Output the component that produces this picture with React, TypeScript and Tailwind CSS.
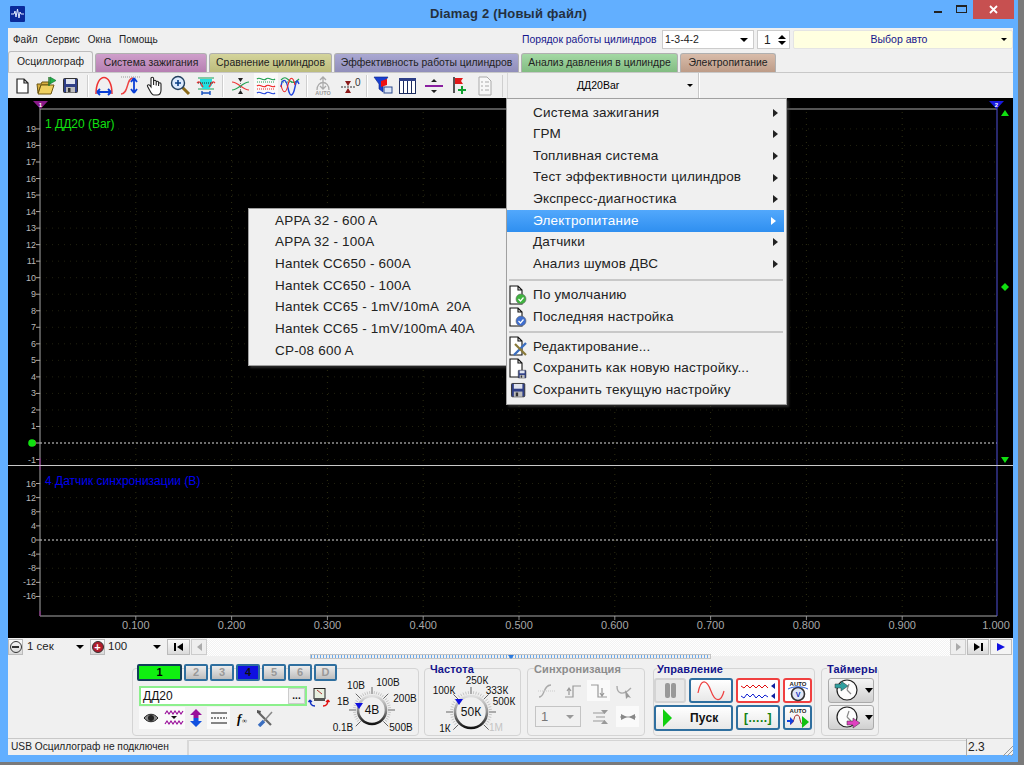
import React from "react";

const F = "[font-family:'Liberation_Sans',Arial,sans-serif]";

const Doc = ({ x = 0, y = 0 }: { x?: number; y?: number }) => (
  <path d={`M${x + 1} ${y + 1}h7l4 4v10h-11z M${x + 8} ${y + 1}v4h4`} fill="#fff" stroke="#222" strokeWidth="1.2" />
);

const Floppy = ({ x = 0, y = 0, s = 1 }: { x?: number; y?: number; s?: number }) => (
  <g transform={`translate(${x} ${y}) scale(${s})`}>
    <rect x="0.5" y="0.5" width="14" height="14" rx="1" fill="#2f3f86" stroke="#333" />
    <rect x="3" y="1" width="9" height="5" fill="#dfe3ee" />
    <rect x="3" y="9" width="9" height="5.5" fill="#bbb" />
    <rect x="5" y="10" width="2.5" height="4" fill="#333" />
  </g>
);

const tool: Record<string, React.ReactNode> = {
  file: <Doc x={4} y={3} />,
  open: (
    <>
      <path d="M1 9h4l1-2h7v3H5l-3 8z" fill="#d8b040" stroke="#6b5510" />
      <path d="M2 19l3-9h13l-3 9z" fill="#efd060" stroke="#6b5510" />
      <path d="M13 2v9" stroke="#2a7a2a" strokeWidth="1.4" />
      <path d="M14 2l6 3.5-6 3.5z" fill="#22b14c" stroke="#14692c" strokeWidth=".6" />
    </>
  ),
  save: <Floppy x={2} y={3} />,
  peak: (
    <>
      <path d="M2 19C2 -3 18 -3 18 19" fill="none" stroke="#ee3333" strokeWidth="1.5" />
      <path d="M3 17h14M3 17l3-3M3 17l3 3M17 17l-3-3M17 17l-3 3" stroke="#0a3fd6" strokeWidth="1.8" fill="none" />
    </>
  ),
  rise: (
    <>
      <path d="M1 2h19" stroke="#999" strokeDasharray="1 1" />
      <path d="M1 19C9 19 6 3 13 3" fill="none" stroke="#ee4444" strokeWidth="1.5" />
      <path d="M14 3v15M14 3l-3 4M14 3l3 4M14 18l-3-4M14 18l3-4" stroke="#0a3fd6" strokeWidth="1.8" fill="none" />
    </>
  ),
  hand: (
    <path d="M6 12V3.500a1.300 1.300 0 0 1 2.600 0V10V6.500a1.300 1.300 0 0 1 2.600 0V10.500V7.500a1.200 1.200 0 0 1 2.400 0V11V9a1.200 1.200 0 0 1 2.400 0v6c0 3-1.500 5-4 5H9c-2 0-3-2-4.500-5L2.600 11.500c-.8-1.300 1-2.400 2-1.300z" fill="#fff" stroke="#222" strokeWidth="1.100" />
  ),
  zoom: (
    <>
      <path d="M12 12l7 7" stroke="#8a6a1a" strokeWidth="3" />
      <circle cx="8" cy="8" r="6.500" fill="#dbeafe" stroke="#22405f" strokeWidth="1.400" />
      <path d="M5 8h6M8 5v6" stroke="#0a3f86" strokeWidth="1.600" />
    </>
  ),
  band: (
    <>
      <path d="M2 3h16M2 14h16" stroke="#18a058" strokeWidth="1.200" />
      <path d="M4 4h12v6l-3 4H7L4 10z" fill="#21e0e0" />
      <path d="M1 8c3-3 4 1 6 4M19 8c-3-3-4 1-6 4" stroke="#ee3333" fill="none" strokeWidth="1.300" />
      <path d="M2 8h16" stroke="#222" strokeDasharray="1 1" />
      <path d="M6 18h8M6 16v4M14 16v4" stroke="#1650c0" strokeWidth="1.400" />
    </>
  ),
  cross: (
    <>
      <path d="M2 7c6 0 11 8 17 8" stroke="#ee3333" fill="none" strokeWidth="1.200" />
      <path d="M2 15c6 0 11-8 17-8" stroke="#20a050" fill="none" strokeWidth="1.200" />
      <path d="M8 3h5l-2.500 4zM8 19h5l-2.500-4z" fill="#222" />
      <path d="M10.500 6v10" stroke="#777" strokeDasharray="1 1" />
    </>
  ),
  waves: (
    <>
      <path d="M1 4c3-3 6 3 9 0s6 3 9 0" stroke="#20a050" fill="none" strokeWidth="1.200" />
      <path d="M1 7h18" stroke="#20a050" strokeDasharray="1 1" />
      <path d="M1 11c3-3 6 3 9 0s6 3 9 0" stroke="#ee2222" fill="none" strokeWidth="1.200" />
      <path d="M1 14h18" stroke="#ee2222" strokeDasharray="1 1" />
      <path d="M1 18c3-3 6 3 9 0s6 3 9 0" stroke="#2244dd" fill="none" strokeWidth="1.200" />
    </>
  ),
  over: (
    <>
      <path d="M1 7h18" stroke="#20a050" strokeDasharray="1 1" />
      <path d="M1 5c4-4 5-2 9 1s6 1 9-2" stroke="#20a050" fill="none" strokeWidth="1.200" />
      <path d="M1 12c1-9 5-9 7 1s5 9 7-1 3-5 4-3" stroke="#2244dd" fill="none" strokeWidth="1.400" />
      <path d="M1 10c2 9 5 9 7 0s5-9 7 0" stroke="#ee2222" fill="none" strokeWidth="1.100" />
    </>
  ),
  autoTop: (
    <>
      <path d="M3 15C3 5 15 5 15 15" stroke="#aaa" fill="none" strokeWidth="1.300" />
      <path d="M9 2v12M6 5l3-3 3 3M6 11l3 3 3-3" stroke="#aaa" fill="none" strokeWidth="1.300" />
      <text x="9" y="20" textAnchor="middle" fontSize="5.500" fontWeight="700" fill="#999" fontFamily="Liberation Sans">AUTO</text>
    </>
  ),
  zero: (
    <>
      <path d="M1 12h14" stroke="#333" strokeDasharray="2 1" />
      <path d="M5 6h6l-3 5zM5 18h6l-3-5z" fill="#8a1a1a" />
      <text x="15" y="11" fontSize="10" fill="#333" fontFamily="Liberation Sans">0</text>
    </>
  ),
  filter: (
    <>
      <path d="M1 2h14l-5 7v8l-4-3V9z" fill="#1a3fd0" stroke="#0b2384" strokeWidth=".6" />
      <path d="M8 6l6-2v6l-6 2z" fill="#e11" />
      <rect x="11" y="12" width="8" height="6" fill="#dce6f7" stroke="#2d4a8f" />
    </>
  ),
  table: (
    <>
      <rect x="1.500" y="3.500" width="16" height="15" fill="#fff" stroke="#1c2c5e" />
      <rect x="1" y="3" width="17" height="3" fill="#2e3f86" />
      <path d="M5.500 6v12M9.500 6v12M13.500 6v12" stroke="#1c2c5e" />
    </>
  ),
  split: (
    <>
      <path d="M1 11h18" stroke="#8a1fa0" strokeWidth="2" />
      <path d="M7 7h6l-3-3zM7 15h6l-3 3z" fill="#222" />
    </>
  ),
  flag: (
    <>
      <path d="M5 2v16" stroke="#222" strokeWidth="1.500" />
      <path d="M6 3h8l-2 3 2 3H6z" fill="#e01818" />
      <path d="M9 14h3v-3h2v3h3v2h-3v3h-2v-3H9z" fill="#10a030" />
    </>
  ),
  report: (
    <>
      <path d="M4 2h8l4 4v14H4z" fill="#f8f8f8" stroke="#aaa" />
      <path d="M6 7h2M6 11h2M6 15h2M10 7h4M10 11h4M10 15h4" stroke="#aaa" />
    </>
  ),
};

function TB({ name, w, active }: { name: string; w: number; active?: boolean }) {
  return (
    <div className={`flex h-[25px] shrink-0 items-center justify-center ${active ? "bg-[#fafafa]" : ""}`} style={{ width: w }}>
      <svg width="21" height="22" viewBox="0 0 21 22" className="shrink-0">
        {tool[name]}
      </svg>
    </div>
  );
}

const Sep = () => <div className="mx-[3px] h-[22px] w-[2px] shrink-0 border-l border-r border-l-[#cfcfcf] border-r-white" />;

function Arrow({ className = "" }: { className?: string }) {
  return <span className={`inline-block h-0 w-0 border-x-[4px] border-t-[4px] border-x-transparent border-t-black ${className}`} />;
}

const tabs = [
  { t: "Система зажигания", w: 112, c: "bg-[linear-gradient(#cf9fcb,#b67fb2)]" },
  { t: "Сравнение цилиндров", w: 123, c: "bg-[linear-gradient(#d4d49c,#bcbc7c)]" },
  { t: "Эффективность работы цилиндров", w: 185, c: "bg-[linear-gradient(#aaa8d2,#908eba)]" },
  { t: "Анализ давления в цилиндре", w: 157, c: "bg-[linear-gradient(#a4d8a4,#82bc82)]" },
  { t: "Электропитание", w: 96, c: "bg-[linear-gradient(#d8bcaa,#bd9c88)]" },
];

function Scope() {
  const xs = Array.from({ length: 10 }, (_, i) => 40 + (i + 1) * 95.8);
  const ch1 = Array.from({ length: 21 }, (_, i) => 19 - i);
  const ch2 = [16, 12, 8, 4, 0, -4, -8, -12, -16];
  const y1 = (v: number) => 443 - v * 16.53;
  const y2 = (v: number) => 540 - v * 3.53;
  return (
    <svg width="1005" height="540" viewBox="8 98 1005 540" className="block bg-black" fontFamily="Liberation Sans">
      {xs.slice(0, 9).map((x) => (
        <g key={x}>
          <path d={`M${x} 112V462M${x} 468V616`} stroke="#2e2e12" strokeDasharray="1 5" />
          <path d={`M${x} 616v4`} stroke="#888" />
        </g>
      ))}
      {ch1.map((v) => (
        <g key={v}>
          {v !== 0 && <path d={`M40 ${y1(v)}H997`} stroke="#222210" strokeDasharray="1 5" />}
          <path d={`M36 ${y1(v)}h4`} stroke="#aaa" />
          <text x="36" y={y1(v) + 3} textAnchor="end" fontSize="9" fill="#b8b8b8">{v}</text>
        </g>
      ))}
      {ch2.map((v) => (
        <g key={v}>
          {v !== 0 && <path d={`M40 ${y2(v)}H997`} stroke="#222210" strokeDasharray="1 5" />}
          <path d={`M36 ${y2(v)}h4`} stroke="#aaa" />
          <text x="36" y={y2(v) + 3} textAnchor="end" fontSize="9" fill="#b8b8b8">{v}</text>
        </g>
      ))}
      <path d="M40 443H997M40 540H997" stroke="#ddd" strokeDasharray="2 2" />
      <path d="M40 109H997" stroke="#a8a8a8" strokeWidth="1" />
      <path d="M40 616H997" stroke="#a8a8a8" />
      <path d="M40 104V465M40 466V616" stroke="#a8a8a8" />
      <path d="M997 104V616" stroke="#5050d8" />
      <path d="M8 465.500H1013" stroke="#c8c8c8" />
      <path d="M40 458v7M40 466v4M40 611v5" stroke="#8a1a8a" />
      <path d="M33 101h15l-7.500 8z" fill="#8a1a8a" />
      <text x="40.500" y="107" textAnchor="middle" fontSize="6" fontWeight="700" fill="#fff">1</text>
      <path d="M989 101h15l-7.500 8z" fill="#1a1ae0" />
      <text x="996.500" y="107" textAnchor="middle" fontSize="6" fontWeight="700" fill="#fff">2</text>
      <path d="M1001 116l4-6 4 6z" fill="#10e010" />
      <path d="M1005 283l4 4-4 4-4-4z" fill="#10e010" />
      <path d="M1001 457h8l-4 6z" fill="#10e010" />
      <circle cx="32" cy="443" r="3.800" fill="#10e010" />
      <text x="45" y="128" fontSize="12" fill="#10e010">1 ДД20 (Bar)</text>
      <text x="45" y="485" fontSize="12" fill="#0000f0">4 Датчик синхронизации (В)</text>
      {xs.map((x, i) => (
        <text key={x} x={i === 9 ? x - 2 : x} y="629" textAnchor="middle" fontSize="11" fill="#a8a8a8">
          {((i + 1) / 10).toFixed(3)}
        </text>
      ))}
    </svg>
  );
}

function DocIcon({ children }: { children: React.ReactNode }) {
  return (
    <svg width="20" height="21" viewBox="0 0 20 21" className="shrink-0">
      <path d="M1 1h8l4 4v14H1z M9 1v4h4" fill="#fff" stroke="#111" strokeWidth="1.100" />
      {children}
    </svg>
  );
}

function MainMenu() {
  const top = ["Система зажигания", "ГРМ", "Топливная система", "Тест эффективности цилиндров", "Экспресс-диагностика", "Электропитание", "Датчики", "Анализ шумов ДВС"];
  const Row = ({ t, icon }: { t: string; icon?: React.ReactNode }) => (
    <div className="flex h-[21.600px] items-center pl-[2px] text-[13.500px] text-[#222]">
      <div className="w-[24px] shrink-0">{icon}</div>
      <span className="whitespace-nowrap tracking-[0.2px]">{t}</span>
    </div>
  );
  return (
    <div className={`absolute left-[498px] top-[70px] z-20 w-[281px] border border-[#a0a0a0] bg-[#f0f0f0] py-[3px] shadow-[2px_2px_2px_rgba(70,70,70,0.6)] ${F}`}>
      {top.map((t, i) => (
        <div key={t} className={`flex h-[21.600px] items-center justify-between pl-[26px] pr-[5px] text-[13.500px] tracking-[0.2px] ${i === 5 ? "mr-[2px] bg-[linear-gradient(#52a8fc,#2f8ff0)] text-white" : "text-[#222]"}`}>
          <span>{t}</span>
          <span className={`mr-[3px] h-0 w-0 border-y-[4px] border-l-[5px] border-y-transparent ${i === 5 ? "border-l-white" : "border-l-[#222]"}`} />
        </div>
      ))}
      <div className="mb-[4px] ml-[2px] mr-[3px] mt-[4px] h-[2px] bg-[#c8c8c8]" />
      <Row t="По умолчанию" icon={<DocIcon><circle cx="12" cy="14" r="5" fill="#3fb43f" stroke="#666" strokeWidth=".6" /><path d="M9.500 14l2 2 3-3.500" stroke="#fff" fill="none" strokeWidth="1.200" /></DocIcon>} />
      <Row t="Последняя настройка" icon={<DocIcon><circle cx="12" cy="14" r="5" fill="#3f6fd0" stroke="#666" strokeWidth=".6" /><path d="M9.500 14l2 2 3-3.500" stroke="#fff" fill="none" strokeWidth="1.200" /></DocIcon>} />
      <div className="my-[3px] ml-[2px] mr-[3px] h-[2px] bg-[#c8c8c8]" />
      <Row t="Редактирование..." icon={<DocIcon><path d="M5 19L17 7" stroke="#3a6ec0" strokeWidth="2.400" /><path d="M6 8l11 11" stroke="#8a7a3a" strokeWidth="2.200" /></DocIcon>} />
      <Row t="Сохранить как новую настройку..." icon={<DocIcon><Floppy x={9} y={12} s={0.55} /></DocIcon>} />
      <Row t="Сохранить текущую настройку" icon={<svg width="20" height="18" viewBox="0 0 20 18"><Floppy x={2} y={2} s={0.95} /></svg>} />
    </div>
  );
}

function SubMenu() {
  const items = ["APPA 32 - 600 A", "APPA 32 - 100A", "Hantek CC650 - 600A", "Hantek CC650 - 100A", "Hantek CC65 - 1mV/10mA  20A", "Hantek CC65 - 1mV/100mA 40A", "CP-08 600 A"];
  return (
    <div className={`absolute left-[240px] top-[180px] z-10 w-[260px] border border-[#a0a0a0] bg-[#f0f0f0] py-[1px] pl-[26px] shadow-[2px_2px_2px_rgba(70,70,70,0.6)] ${F}`}>
      {items.map((t) => (
        <div key={t} className="flex h-[21.700px] items-center whitespace-pre text-[13.500px] tracking-[0.2px] text-[#222]">{t}</div>
      ))}
      <div className="h-[2px]" />
    </div>
  );
}

function Knob({ w, h, cx, cy, r, value, labels, pointer, size = 10 }: { w: number; h: number; cx: number; cy: number; r: number; value: string; labels: [string, number, number, string?][]; pointer: [number, number]; size?: number }) {
  const ticks = Array.from({ length: 37 }, (_, i) => (-225 + i * 7.5) * (Math.PI / 180));
  return (
    <svg width={w} height={h} viewBox={`0 0 ${w} ${h}`} className="shrink-0" fontFamily="Liberation Sans">
      <defs>
        <linearGradient id={`k${w}`} x1="0" y1="0" x2="0" y2="1">
          <stop offset="0" stopColor="#e0e0e0" />
          <stop offset="0.5" stopColor="#909090" />
          <stop offset="1" stopColor="#111" />
        </linearGradient>
      </defs>
      {ticks.map((a, i) => (
        <path key={i} d={`M${cx + Math.cos(a) * (r + 2)} ${cy + Math.sin(a) * (r + 2)}L${cx + Math.cos(a) * (r + (i % 6 === 0 ? 9 : 5))} ${cy + Math.sin(a) * (r + (i % 6 === 0 ? 9 : 5))}`} stroke={i % 6 === 0 ? "#666" : "#c4c4c4"} />
      ))}
      <circle cx={cx} cy={cy} r={r} fill="#f0f0f0" stroke={`url(#k${w})`} strokeWidth="2.600" />
      <text x={cx} y={cy + 4} textAnchor="middle" fontSize="12" fill="#111">{value}</text>
      <path d={`M${pointer[0] - 4} ${pointer[1] - 3}h8l-4 6z`} fill="#1010e0" />
      {labels.map(([t, x, y, c]) => (
        <text key={t} x={x} y={y} textAnchor="middle" fontSize={size} fill={c || "#111"}>{t}</text>
      ))}
    </svg>
  );
}

function Ch({ t, w, kind }: { t: string; w: number; kind: "green" | "blue" | "off" }) {
  const c = kind === "green" ? "bg-[#10f010] border-[#123e5a] text-black" : kind === "blue" ? "bg-[#1010e0] border-[#2c6ea0] text-[#111]" : "bg-[linear-gradient(#ececec,#bdbdbd)] border-[#2f6f9f] text-[#999]";
  return <div className={`flex h-[17px] shrink-0 items-center justify-center rounded-[2px] border-2 text-[11px] font-bold ${c}`} style={{ width: w }}>{t}</div>;
}

function Ico({ w, h = 21, active, children }: { w: number; h?: number; active?: boolean; children: React.ReactNode }) {
  return (
    <div className={`flex shrink-0 items-center justify-center ${active ? "bg-[#fafafa]" : ""}`} style={{ width: w, height: h }}>
      <svg width="20" height="18" viewBox="0 0 20 18">{children}</svg>
    </div>
  );
}

function Legend({ t, dim, left }: { t: string; dim?: boolean; left: number }) {
  return <div className={`absolute top-[-6px] bg-[#f0f0f0] text-[11px] font-bold leading-[13px] tracking-[0.1px] ${dim ? "text-[#8c8c8c]" : "text-[#14148c]"}`} style={{ left }}>{t}</div>;
}

function Btn({ w, red, gray, children }: { w: number; red?: boolean; gray?: boolean; children: React.ReactNode }) {
  const c = red ? "border-[#f04040] bg-white" : gray ? "border-[#d4d4d4] bg-[#e8e8e8]" : "border-[#2f6f9f] bg-[linear-gradient(#fff,#e8e8e8)]";
  return <div className={`flex h-[25px] items-center justify-center rounded-[3px] border-2 ${c}`} style={{ width: w }}>{children}</div>;
}

function Clock({ pink }: { pink?: boolean }) {
  return (
    <div className="flex h-[25px] w-[46px] items-center rounded-[3px] border border-[#aaa] bg-[linear-gradient(#f5f5f5,#d0d0d0)] pl-[5px]">
      <svg width="27" height="23" viewBox="0 0 27 23">
        <circle cx="13" cy="11" r="10" fill="#fdfdfd" stroke="#222" strokeWidth="1.200" />
        <path d="M13 11l2-6M13 11l4 4" stroke="#888" strokeWidth="1.200" />
        {pink ? <path d="M13 15h6v-3l7 5-7 5v-3h-6z" fill="#e040c0" stroke="#333" strokeWidth=".5" /> : <path d="M1 5h6V2l7 5-7 5V9H1z" fill="#30a0a0" stroke="#333" strokeWidth=".5" />}
      </svg>
      <Arrow className="ml-[4px] !border-x-[4.500px] !border-t-[5px]" />
    </div>
  );
}

function Bottom() {
  return (
    <div className="flex h-[82px] flex-col">
      <div className="mx-auto mt-[-2px] flex h-[5px] w-[401px] justify-center border border-[#c4c4c4] bg-[repeating-linear-gradient(90deg,#6aa8e8_0,#6aa8e8_1px,#f0f0f0_1px,#f0f0f0_3px)]">
        <span className="h-0 w-0 border-x-[3px] border-t-[4px] border-x-transparent border-t-[#2a7ae0]" />
      </div>
      <div className={`flex pl-[124px] pt-[9px] text-[#111] ${F}`}>
        {/* Channels */}
        <div className="flex h-[68px] w-[287px] rounded-[4px] border border-[#d4d4d4] pl-[4px]">
          <div className="mt-[-5px] w-[173px] shrink-0">
            <div className="flex gap-[2px]">
              <Ch t="1" w={45} kind="green" />
              <Ch t="2" w={24} kind="off" />
              <Ch t="3" w={24} kind="off" />
              <Ch t="4" w={24} kind="blue" />
              <Ch t="5" w={24} kind="off" />
              <Ch t="6" w={24} kind="off" />
              <Ch t="D" w={23} kind="off" />
            </div>
            <div className="mt-[5px] ml-[2px] flex h-[20px] w-[168px] items-center justify-between border-2 border-[#8cf08c] bg-white pl-[2px] text-[12px]">
              ДД20
              <span className="flex h-[16px] w-[17px] items-center justify-center border border-[#ccc] bg-[#f0f0f0] text-[10px] font-bold leading-[8px]">...</span>
            </div>
            <div className="ml-[2px] mt-[1px] flex">
              <Ico w={23} h={22} active>
                <path d="M3 9c4-5 10-5 14 0-4 5-10 5-14 0z" fill="#888" stroke="#222" />
                <circle cx="10" cy="9" r="3" fill="#222" />
              </Ico>
              <Ico w={23} h={22} active>
                <path d="M1 5l2-3 2 3 2-3 2 3 2-3 2 3 2-3 2 3 2-3" stroke="#9a109a" fill="none" strokeWidth="1.200" />
                <path d="M7 7h6l-3 3z" fill="#111" />
                <path d="M1 15l2-3 2 3 2-3 2 3 2-3 2 3 2-3 2 3 2-3" stroke="#9a109a" fill="none" strokeWidth="1.200" />
              </Ico>
              <Ico w={22} h={22}>
                <path d="M10 0l6 6h-3.500v3h-5V6H4z" fill="#9a109a" />
                <path d="M10 18l6-6h-3.500V9h-5v3H4z" fill="#1050e0" />
              </Ico>
              <Ico w={23} h={22} active>
                <path d="M2 4h16M2 14h16" stroke="#111" strokeWidth="1.200" />
                <path d="M2 9h16" stroke="#111" strokeDasharray="2 1" />
              </Ico>
              <Ico w={24} h={22}>
                <text x="5" y="14" fontSize="13" fontWeight="700" fontStyle="italic" fontFamily="Liberation Serif">f</text>
                <text x="10" y="14" fontSize="7" fontWeight="700" fontFamily="Liberation Serif">∞</text>
              </Ico>
              <Ico w={22} h={22}>
                <path d="M4 4l12 12" stroke="#666" strokeWidth="2.200" />
                <path d="M2 1l4 1-1 3-3-1z" fill="#555" />
                <path d="M4 17L9 12" stroke="#3a6ec0" strokeWidth="3.400" />
                <path d="M9 12L17 3" stroke="#888" strokeWidth="1.500" />
              </Ico>
            </div>
          </div>
          <div className="mt-[19px] h-[20px] w-[14px] shrink-0">
            <svg width="20" height="20" viewBox="0 0 20 20" className="overflow-visible">
              <rect x="4" y="0.500" width="11" height="10" fill="#e8f0e0" stroke="#222" />
              <path d="M7 2l5 4" stroke="#a33" />
              <rect x="4" y="10" width="11" height="3" fill="#555" />
              <path d="M0 12c0 4 2 6 5 6M0 12l-1.500 2M0 12l2 2" stroke="#1030c0" fill="none" strokeWidth="1.300" />
              <path d="M18 12c0 4-2 6-5 6M18 12l-2 2M18 12l1.500 2" stroke="#e01010" fill="none" strokeWidth="1.300" />
            </svg>
          </div>
          <Knob
            w={94}
            h={66}
            cx={48}
            cy={41}
            r={14}
            value="4В"
            pointer={[35, 37]}
            labels={[["10В", 32, 20], ["100В", 64, 17], ["200В", 81, 33], ["1В", 19, 36], ["0.1В", 19, 62], ["500В", 77, 62]]}
          />
        </div>
        {/* Frequency */}
        <div className="relative ml-[5px] flex h-[68px] w-[97px] rounded-[4px] border border-[#d4d4d4]">
          <Legend t="Частота" left={5} />
          <Knob
            w={95}
            h={66}
            cx={46}
            cy={43}
            r={16}
            value="50К"
            pointer={[34, 33]}
            labels={[["250К", 52, 15], ["100К", 19, 25], ["333К", 72, 25], ["500К", 79, 36], ["1К", 20, 63], ["1М", 71, 62, "#c4c4c4"]]}
          />
        </div>
        {/* Sync */}
        <div className="relative ml-[6px] h-[68px] w-[118px] rounded-[4px] border border-[#d4d4d4] pl-[7px] pt-[11px]">
          <Legend t="Синхронизация" dim left={6} />
          <div className="flex gap-[3px]">
            <Ico w={23}><path d="M2 15c6 0 4-12 12-12" stroke="#aaa" fill="none" strokeWidth="1.400" /><path d="M1 9h18" stroke="#ccc" strokeDasharray="1 1" /></Ico>
            <Ico w={23}><path d="M2 15h8V4h8M6 13V7M4 9l2-3 2 3" stroke="#999" fill="none" strokeWidth="1.200" /></Ico>
            <Ico w={23} active><path d="M2 3h7v12h9M13 6v7M11 11l2 3 2-3" stroke="#999" fill="none" strokeWidth="1.200" /></Ico>
            <Ico w={23}><path d="M2 4c0 8 6 10 14 2" stroke="#aaa" fill="none" strokeWidth="1.400" /><path d="M10 8l6 8-3-1-2 2z" fill="#999" /></Ico>
          </div>
          <div className="mt-[5px] flex items-center">
            <div className="flex h-[21px] w-[46px] items-center justify-between border border-[#c4c4c4] pl-[5px] pr-[6px] text-[13px] text-[#777]">
              1
              <Arrow className="!border-t-[#999]" />
            </div>
            <div className="ml-[8px]">
              <Ico w={23}><path d="M2 5h12M5 9h9M2 13h12" stroke="#999" /><path d="M10 2h7l-3.500 4zM10 16h7l-3.500-4z" fill="#999" /></Ico>
            </div>
            <div className="ml-[4px]">
              <Ico w={23} active><path d="M2 9h16" stroke="#999" /><path d="M3 6l6 3-6 3zM17 6l-6 3 6 3z" fill="#888" /></Ico>
            </div>
          </div>
        </div>
        {/* Control */}
        <div className="relative ml-[8px] h-[68px] w-[162px] rounded-[4px] border border-[#d4d4d4] pt-[9px]">
          <Legend t="Управление" left={3} />
          <div className="flex gap-[3px]">
            <Btn w={32} gray><span className="flex gap-[1px]"><span className="h-[15px] w-[5px] rounded-[2px] bg-[#999]" /><span className="h-[15px] w-[5px] rounded-[2px] bg-[#999]" /></span></Btn>
            <Btn w={44}><svg width="30" height="20" viewBox="0 0 30 20"><path d="M2 12C5 -4 11 -1 15 10s10 12 13 0" stroke="#ee4040" fill="none" strokeWidth="1.200" /></svg></Btn>
            <Btn w={44} red><svg width="36" height="20" viewBox="0 0 36 20"><path d="M1 5l3 2 3-3 3 3 3-3 3 3 3-3 3 3 3-3 3 3" stroke="#e01010" fill="none" /><path d="M1 15l3 2 3-4 3 3 3-3 3 4 3-3 3 3 3-3 3 2" stroke="#1020d0" fill="none" /><path d="M35 2v6l-4-3zM35 12v6l-4-3z" fill="#1020a0" /></svg></Btn>
            <Btn w={29} red><svg width="24" height="22" viewBox="0 0 24 22"><text x="12" y="6" textAnchor="middle" fontSize="6" fontWeight="700" fill="#222">AUTO</text><circle cx="12" cy="14" r="6.500" fill="#dfe6f7" stroke="#333" strokeWidth="1.600" /><text x="12" y="17" textAnchor="middle" fontSize="7" fontWeight="700" fill="#1030c0">V</text><path d="M2 9c6-3 14-3 20 0" stroke="#2a5fe0" fill="none" /></svg></Btn>
          </div>
          <div className="mt-[2px] flex gap-[3px]">
            <div className="flex h-[26px] w-[79px] items-center rounded-[3px] border-2 border-[#2f6f9f] bg-[linear-gradient(#fff,#e8e8e8)] pl-[7px]">
              <span className="h-0 w-0 border-y-[9px] border-l-[9px] border-y-transparent border-l-[#10d010]" />
              <span className="ml-[18px] text-[12px] font-bold tracking-[0.2px]">Пуск</span>
            </div>
            <Btn w={44}><span className="text-[12px] font-bold tracking-[0.5px] text-[#108010]">[.....]</span></Btn>
            <Btn w={29}><svg width="24" height="22" viewBox="0 0 24 22"><text x="12" y="6" textAnchor="middle" fontSize="6" fontWeight="700" fill="#222">AUTO</text><path d="M4 17c5 0 3-9 7-9s2 9 6 9" stroke="#a02020" fill="none" /><path d="M1 13h3V10l4 4-4 4v-3H1z" fill="#1040e0" /><path d="M16 9l7 6-7 6z" fill="#10c010" /></svg></Btn>
          </div>
        </div>
        {/* Timers */}
        <div className="relative ml-[6px] h-[68px] w-[58px] rounded-[4px] border border-[#d4d4d4] pl-[6px] pt-[9px]">
          <Legend t="Таймеры" left={5} />
          <Clock />
          <div className="mt-[2px]"><Clock pink /></div>
        </div>
      </div>
    </div>
  );
}

export default function App() {
  return (
    <div className="h-[765px] w-[1024px] overflow-hidden bg-[#7a7a7a]">
      <div className={`flex h-[762px] w-[1018px] flex-col bg-[#62afff] ${F}`}>
        {/* Title */}
        <div className="relative flex h-[28px] shrink-0 items-center justify-center pr-[1px]">
          <div className="absolute left-[10px] top-[6px] flex h-[16px] w-[15px] items-center justify-center rounded-[1px] bg-[#0a2a9a]">
            <svg width="13" height="12" viewBox="0 0 13 12"><path d="M0 6h3l1-3 1 6 1.500-8 1.500 9 1-6 1 2h3" stroke="#dfe9ff" fill="none" /></svg>
          </div>
          <span className="text-[13px] font-bold tracking-[0.2px] text-[#24303e]">Diamag 2 (Новый файл)</span>
          <div className="absolute right-[4px] top-0 flex items-start">
            <div className="mt-[11px] mr-[14px] h-[2px] w-[8px] bg-[#222]" />
            <div className="mt-[5px] mr-[6px] h-[8px] w-[11px] border border-t-2 border-[#222]" />
            <div className="flex h-[19px] w-[41px] items-center justify-center bg-[#c75050]">
              <svg width="9" height="9" viewBox="0 0 9 9"><path d="M1 1l7 7M8 1l-7 7" stroke="#fff" strokeWidth="1.800" /></svg>
            </div>
          </div>
        </div>
        {/* Client */}
        <div className="relative ml-[8px] h-[727px] w-[1005px] bg-[#f0f0f0]">
          {/* Menu row */}
          <div className="flex h-[23px] items-center text-[10px] text-[#222]">
            <div className="flex gap-[8px] pl-[5px]">
              <span>Файл</span><span>Сервис</span><span>Окна</span><span>Помощь</span>
            </div>
            <div className="ml-auto flex items-center">
              <span className="w-[133px] whitespace-nowrap text-[10.400px] text-[#16168c]">Порядок работы цилиндров</span>
              <div className="ml-[7px] flex h-[19px] w-[92px] items-center justify-between border border-[#ccc] bg-white pl-[2px] pr-[5px] text-[10.500px]">
                1-3-4-2
                <Arrow />
              </div>
              <div className="ml-[3px] flex h-[19px] w-[33px] items-center justify-between border border-[#ccc] bg-white pl-[6px] pr-[3px] text-[12px]">
                1
                <span className="flex flex-col gap-[2px]">
                  <span className="h-0 w-0 border-x-[4px] border-b-[4px] border-x-transparent border-b-black" />
                  <Arrow />
                </span>
              </div>
              <div className="relative ml-[3px] flex h-[19px] w-[220px] items-center justify-center rounded-[2px] border border-[#e4e4e4] bg-[#ffffe0] text-[10.500px] text-[#14148c]">
                <span className="ml-[-8px]">Выбор авто</span>
                <Arrow className="absolute right-[5px] !border-x-[3px] !border-t-[3px]" />
              </div>
            </div>
          </div>
          {/* Tabs */}
          <div className="flex h-[21px] items-end gap-[2px] text-[10.400px] text-[#222]">
            <div className="flex h-[21px] w-[85px] items-center justify-center rounded-t-[3px] border border-b-0 border-[#bdbdbd] bg-[#f0f0f0]">Осциллограф</div>
            {tabs.map((t) => (
              <div key={t.t} className={`flex h-[19px] items-center justify-center rounded-t-[3px] border border-b-0 border-[#b0b0b0] ${t.c}`} style={{ width: t.w }}>
                {t.t}
              </div>
            ))}
          </div>
          {/* Toolbar */}
          <div className="flex h-[26px] items-center border-t border-[#c8c8c8] pl-[2px] text-[10.500px]">
            <TB name="file" w={24} />
            <TB name="open" w={25} />
            <TB name="save" w={25} />
            <Sep />
            <TB name="peak" w={25} />
            <TB name="rise" w={26} />
            <TB name="hand" w={25} />
            <TB name="zoom" w={25} />
            <TB name="band" w={26} />
            <Sep />
            <TB name="cross" w={27} />
            <TB name="waves" w={24} active />
            <TB name="over" w={25} />
            <Sep />
            <TB name="autoTop" w={26} />
            <TB name="zero" w={26} />
            <Sep />
            <TB name="filter" w={24} />
            <TB name="table" w={26} />
            <TB name="split" w={26} />
            <TB name="flag" w={24} />
            <TB name="report" w={28} />
            <div className="ml-[3px] h-[22px] w-[1px] bg-[#cfcfcf]" />
            <div className="ml-[4px] flex h-[25px] w-[191px] items-center justify-between border-l border-[#d8d8d8] pl-[69px] pr-[5px]">
              <span>ДД20Bar</span>
              <Arrow className="!border-x-[3px] !border-t-[3px]" />
            </div>
            <div className="h-[25px] w-[2px] border-l border-r border-l-[#c8c8c8] border-r-white" />
          </div>
          <Scope />
          {/* Scroll row */}
          <div className="flex h-[18px] items-center text-[11.500px] text-[#222]">
            <div className="flex h-[16px] w-[15px] items-center justify-center border border-[#bbb] bg-[linear-gradient(#fafafa,#dadada)]">
              <span className="flex h-[12px] w-[12px] items-center justify-center rounded-full border border-[#333]"><span className="h-[1.500px] w-[7px] bg-[#333]" /></span>
            </div>
            <div className="flex w-[67px] items-center justify-between pl-[4px] pr-[6px]">1 сек<Arrow /></div>
            <div className="flex h-[16px] w-[15px] items-center justify-center border border-[#bbb] bg-[linear-gradient(#fafafa,#dadada)]">
              <span className="flex h-[12px] w-[12px] items-center justify-center rounded-full border border-[#333] bg-[#b01c2c] text-[11px] font-bold leading-none text-white">+</span>
            </div>
            <div className="flex w-[62px] items-center justify-between pl-[3px] pr-[6px]">100<Arrow /></div>
            <div className="flex h-[16px] w-[23px] items-center justify-center gap-[1px] border border-[#bbb] bg-[linear-gradient(#fafafa,#dadada)]">
              <span className="h-[8px] w-[2px] bg-black" /><span className="h-0 w-0 border-y-[4px] border-r-[6px] border-y-transparent border-r-black" />
            </div>
            <div className="ml-[1px] flex h-[16px] w-[16px] items-center justify-center border border-[#ccc] bg-[#eeeeee]">
              <span className="h-0 w-0 border-y-[4px] border-r-[5px] border-y-transparent border-r-[#aaa]" />
            </div>
            <div className="h-[18px] flex-1 bg-[repeating-conic-gradient(#ffffff_0%_25%,#f2f2f2_0%_50%)] bg-[length:2px_2px]" />
            <div className="flex h-[16px] w-[16px] items-center justify-center border border-[#ccc] bg-[#eeeeee]">
              <span className="h-0 w-0 border-y-[4px] border-l-[5px] border-y-transparent border-l-[#aaa]" />
            </div>
            <div className="ml-[1px] flex h-[16px] w-[22px] items-center justify-center gap-[1px] border border-[#bbb] bg-[linear-gradient(#fafafa,#dadada)]">
              <span className="h-0 w-0 border-y-[4px] border-l-[6px] border-y-transparent border-l-black" /><span className="h-[8px] w-[2px] bg-black" />
            </div>
            <div className="ml-[1px] mr-[1px] flex h-[16px] w-[22px] items-center justify-center border border-[#bbb] bg-[#f4f4f4]">
              <span className="h-0 w-0 border-y-[4.500px] border-l-[8px] border-y-transparent border-l-[#1010e0]" />
            </div>
          </div>
          <Bottom />
          {/* Status */}
          <div className="flex h-[17px] items-center border-t border-[#c8c8c8] text-[10.200px] text-[#222]">
            <div className="w-[179px] whitespace-nowrap pl-[3px]">USB Осциллограф не подключен</div>
            <div className="h-[15px] w-[2px] bg-[#d8d8d8]" />
            <div className="h-[15px] w-[777px] border-t border-[#d4d4d4]" />
            <div className="relative flex h-[17px] flex-1 items-center border-l border-[#aaa] pl-[1px] text-[12px]">
              2.3
              <svg width="12" height="12" viewBox="0 0 12 12" className="absolute bottom-0 right-0"><path d="M2 12L12 2M6 12l6-6M10 12l2-2" stroke="#999" /></svg>
            </div>
          </div>
          <MainMenu />
          <SubMenu />
        </div>
      </div>
    </div>
  );
}
